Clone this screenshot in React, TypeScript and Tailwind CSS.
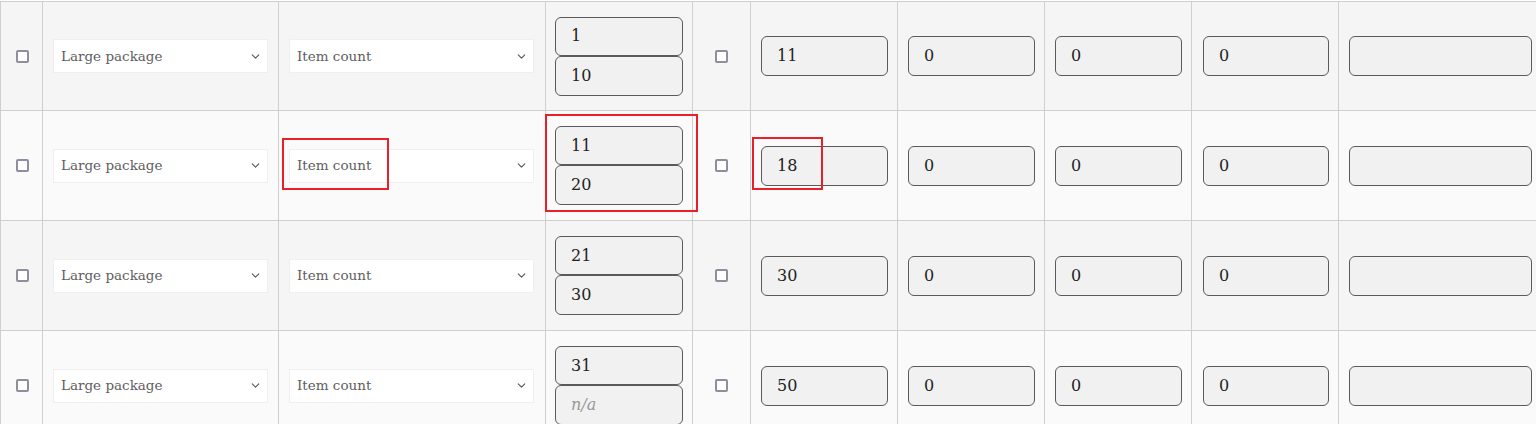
import { ChevronDown } from "lucide-react";

type Row = { from: string; to: string; price: string };

const rows: Row[] = [
    { from: "1", to: "10", price: "11" },
    { from: "11", to: "20", price: "18" },
    { from: "21", to: "30", price: "30" },
    { from: "31", to: "", price: "50" },
];

const Check = () => (
    <div className="h-[13px] w-[13px] rounded-[2px] border-2 border-[#8e8e9c] bg-white" />
);

const Select = ({ label, width }: { label: string; width: string }) => (
    <div className={`flex h-[34px] ${width} items-center justify-between border border-[#efefef] bg-white pl-[7px] pr-[5px] text-[13.5px] text-[#5e5e5e]`}>
        <span>{label}</span>
        <ChevronDown size={13} strokeWidth={2} className="text-[#555]" />
    </div>
);

const Field = ({ value, placeholder, cls }: { value: string; placeholder?: string; cls: string }) => (
    <div className={`flex items-center rounded-[6px] border border-[#5a5a5a] bg-[#f1f1f1] pl-[15px] text-[16px] text-[#222] ${cls}`}>
        {value ? value : <span className="italic text-[#999]">{placeholder}</span>}
    </div>
);

const App = () => {
    return (
        <div className="relative h-[424px] w-[1536px] overflow-hidden bg-white pt-px font-['DejaVu_Serif',serif]">
            <div className="border-t border-l border-[#cfcfcf]">
                {rows.map((r, i) => (
                    <div
                        key={i}
                        className={`grid grid-cols-[42px_236px_267px_147px_58px_147px_147px_147px_147px_1fr] border-b border-[#cfcfcf] ${i === 0 ? "h-[109px]" : "h-[110px]"} ${i % 2 === 0 ? "bg-[#f5f5f5]" : "bg-[#fafafa]"}`}
                    >
                        <div className="flex items-center justify-center border-r border-[#cfcfcf] pl-px">
                            <Check />
                        </div>
                        <div className="flex items-center border-r border-[#cfcfcf] pl-[10px]">
                            <Select label="Large package" width="w-[215px]" />
                        </div>
                        <div className="flex items-center border-r border-[#cfcfcf] pl-[10px]">
                            <Select label="Item count" width="w-[245px]" />
                        </div>
                        <div className="flex flex-col justify-center border-r border-[#cfcfcf] pl-[9px]">
                            <Field value={r.from} cls="h-[39px] w-[128px]" />
                            <Field value={r.to} placeholder="n/a" cls="h-[40px] w-[128px]" />
                        </div>
                        <div className="flex items-center justify-center border-r border-[#cfcfcf]">
                            <Check />
                        </div>
                        <div className="flex items-center border-r border-[#cfcfcf] pl-[10px]">
                            <Field value={r.price} cls="h-[40px] w-[127px]" />
                        </div>
                        <div className="flex items-center border-r border-[#cfcfcf] pl-[10px]">
                            <Field value="0" cls="h-[40px] w-[127px]" />
                        </div>
                        <div className="flex items-center border-r border-[#cfcfcf] pl-[10px]">
                            <Field value="0" cls="h-[40px] w-[127px]" />
                        </div>
                        <div className="flex items-center border-r border-[#cfcfcf] pl-[11px]">
                            <Field value="0" cls="h-[40px] w-[126px]" />
                        </div>
                        <div className="flex items-center pl-[10px]">
                            <Field value="" cls="h-[40px] w-[183px]" />
                        </div>
                    </div>
                ))}
            </div>

            {/* red annotation boxes */}
            <div className="absolute left-[282px] top-[138px] h-[52px] w-[107px] border-2 border-[#e8202a]" />
            <div className="absolute left-[545px] top-[114px] h-[98px] w-[153px] border-2 border-[#e8202a]" />
            <div className="absolute left-[752px] top-[137px] h-[53px] w-[71px] border-2 border-[#e8202a]" />
        </div>
    );
};

export default App;
